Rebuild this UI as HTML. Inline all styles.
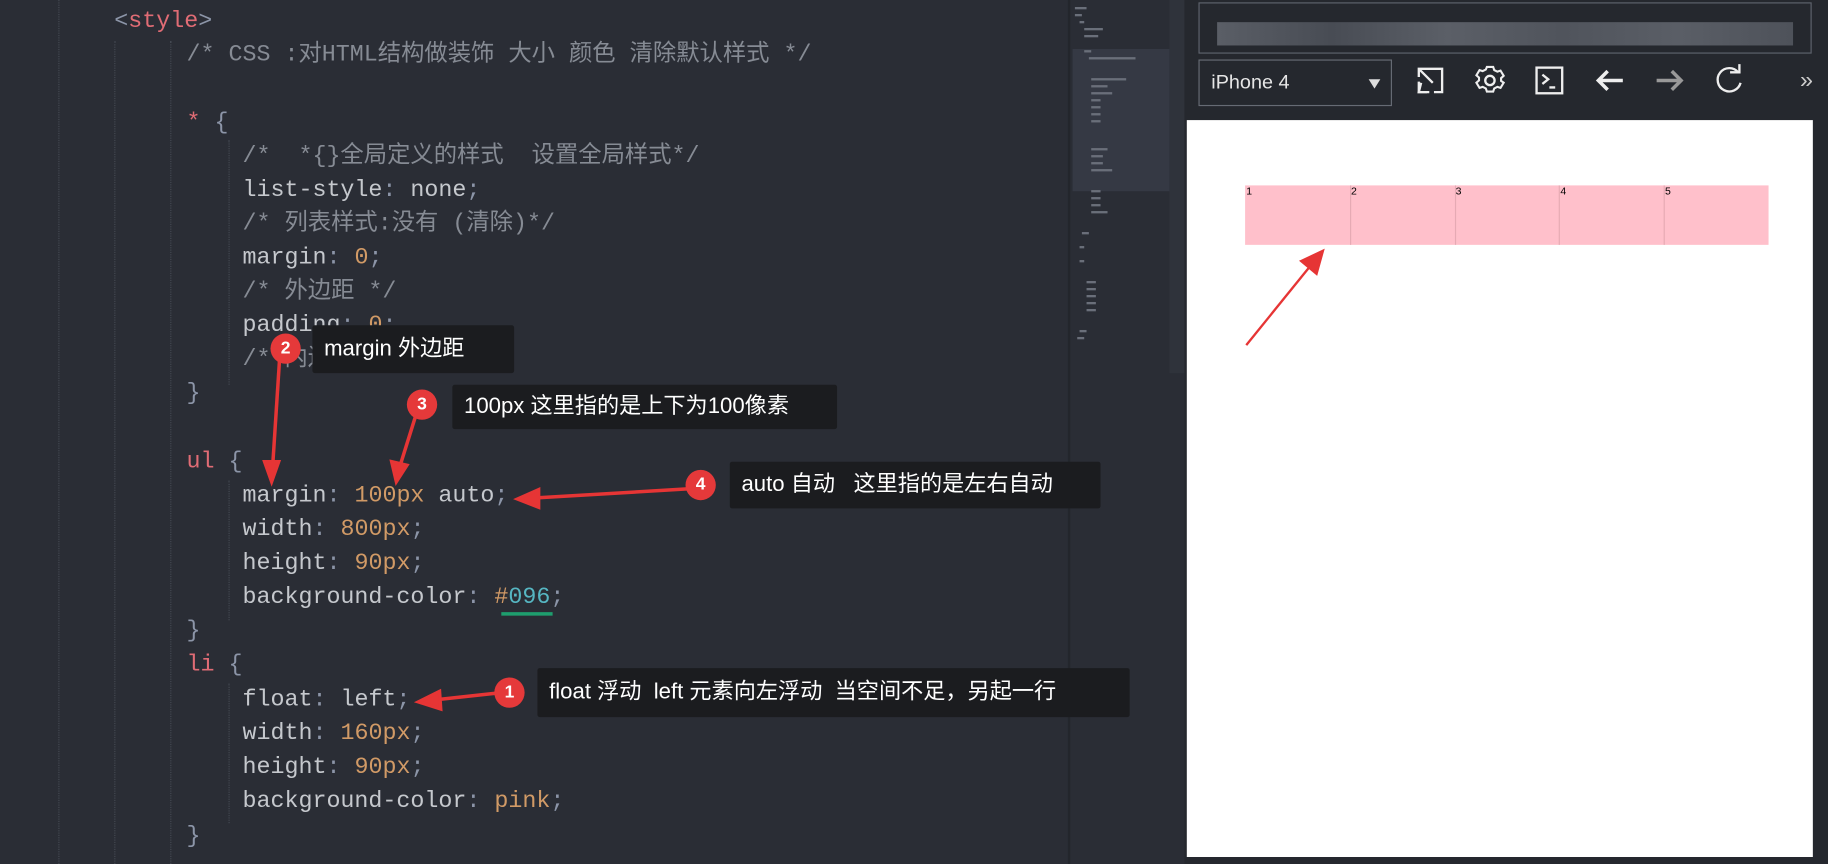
<!DOCTYPE html>
<html><head><meta charset="utf-8">
<style>
html,body{margin:0;padding:0;background:#2a2d35;overflow:hidden;width:1828px;height:864px}
#w{position:absolute;left:0;top:0;width:1568px;height:741px;transform:scale(1.16582,1.16599);transform-origin:0 0;background:#2a2d35;overflow:hidden}
.ln{position:absolute;font-family:"Liberation Mono","Noto Sans CJK SC",monospace;font-size:20px;line-height:29px;height:29px;color:#c5c8cd;white-space:pre;letter-spacing:0}
.c{color:#868b94}
.s{color:#e06c75}
.n{color:#d19a66}
.p{color:#8c95a8}
.g{position:absolute;width:0;border-left:1px dotted #444952}
.box{position:absolute;background:#1b1c1f;color:#fff;font-family:"Liberation Sans","Noto Sans CJK SC",sans-serif;font-size:19px;line-height:20px;padding:0 0 0 10px;display:flex;align-items:center;white-space:pre;border-radius:2px}
.dot{position:absolute;width:26px;height:26px;border-radius:50%;background:#e5393a;color:#fff;font:bold 15px "Liberation Sans",sans-serif;text-align:center;line-height:26px}
.tb{position:absolute;top:52px;width:34px;height:34px}
</style></head><body><div id="w">
<div class="g" style="left:50px;top:0;height:741px"></div>
<div class="g" style="left:98px;top:35px;height:706px"></div>
<div class="g" style="left:146px;top:35px;height:706px"></div>
<div class="g" style="left:196px;top:120px;height:210px"></div>
<div class="g" style="left:196px;top:412px;height:120px"></div>
<div class="g" style="left:196px;top:586px;height:120px"></div>

<div class="ln" style="left:98px;top:4px"><span class="p">&lt;</span><span class="s">style</span><span class="p">&gt;</span></div>
<div class="ln c" style="left:160px;top:33px">/* CSS :对HTML结构做装饰 大小 颜色 清除默认样式 */</div>
<div class="ln" style="left:160px;top:91px"><span class="s">*</span> <span class="p">{</span></div>
<div class="ln c" style="left:208px;top:120px">/*  *{}全局定义的样式  设置全局样式*/</div>
<div class="ln" style="left:208px;top:149px">list-style<span class="p">:</span> none<span class="p">;</span></div>
<div class="ln c" style="left:208px;top:178px">/* 列表样式:没有 (清除)*/</div>
<div class="ln" style="left:208px;top:207px">margin<span class="p">:</span> <span class="n">0</span><span class="p">;</span></div>
<div class="ln c" style="left:208px;top:236px">/* 外边距 */</div>
<div class="ln" style="left:208px;top:265px">padding<span class="p">:</span> <span class="n">0</span><span class="p">;</span></div>
<div class="ln c" style="left:208px;top:294px">/* 内边距 */</div>
<div class="ln p" style="left:160px;top:323px">}</div>
<div class="ln" style="left:160px;top:382px"><span class="s">ul</span> <span class="p">{</span></div>
<div class="ln" style="left:208px;top:411px">margin<span class="p">:</span> <span class="n">100px</span> auto<span class="p">;</span></div>
<div class="ln" style="left:208px;top:440px">width<span class="p">:</span> <span class="n">800px</span><span class="p">;</span></div>
<div class="ln" style="left:208px;top:469px">height<span class="p">:</span> <span class="n">90px</span><span class="p">;</span></div>
<div class="ln" style="left:208px;top:498px">background-color<span class="p">:</span> <span class="n">#</span><span style="color:#56b6c2">096</span><span class="p">;</span></div>
<div style="position:absolute;left:430px;top:525px;width:44px;height:3px;background:#1e9e6e"></div>
<div class="ln p" style="left:160px;top:527px">}</div>
<div class="ln" style="left:160px;top:556px"><span class="s">li</span> <span class="p">{</span></div>
<div class="ln" style="left:208px;top:586px">float<span class="p">:</span> left<span class="p">;</span></div>
<div class="ln" style="left:208px;top:615px">width<span class="p">:</span> <span class="n">160px</span><span class="p">;</span></div>
<div class="ln" style="left:208px;top:644px">height<span class="p">:</span> <span class="n">90px</span><span class="p">;</span></div>
<div class="ln" style="left:208px;top:673px">background-color<span class="p">:</span> <span class="n">pink</span><span class="p">;</span></div>
<div class="ln p" style="left:160px;top:703px">}</div>

<!-- minimap -->
<div style="position:absolute;left:916px;top:0;width:2px;height:741px;background:#23262c"></div>
<div style="position:absolute;left:920px;top:42px;width:84px;height:122px;background:#353944"></div>
<svg style="position:absolute;left:918px;top:0" width="100" height="741">
<g fill="#6a6f7a">
<rect x="4" y="6" width="10" height="2"/><rect x="4" y="12" width="6" height="2"/><rect x="8" y="18" width="4" height="2"/><rect x="12" y="24" width="16" height="2"/><rect x="12" y="30" width="12" height="2"/>
<rect x="12" y="43" width="6" height="2"/><rect x="16" y="49" width="40" height="2"/><rect x="18" y="67" width="30" height="2"/><rect x="18" y="73" width="14" height="2"/><rect x="18" y="79" width="18" height="2"/><rect x="18" y="85" width="8" height="2"/><rect x="18" y="91" width="8" height="2"/><rect x="18" y="97" width="8" height="2"/><rect x="18" y="103" width="8" height="2"/>
<rect x="18" y="127" width="14" height="2"/><rect x="18" y="133" width="10" height="2"/><rect x="18" y="139" width="10" height="2"/><rect x="18" y="145" width="18" height="2"/><rect x="18" y="163" width="8" height="2"/><rect x="18" y="169" width="8" height="2"/><rect x="18" y="175" width="8" height="2"/><rect x="18" y="181" width="14" height="2"/>
<rect x="10" y="199" width="6" height="2"/><rect x="8" y="211" width="4" height="2"/><rect x="8" y="223" width="4" height="2"/><rect x="14" y="241" width="8" height="2"/><rect x="14" y="247" width="8" height="2"/><rect x="14" y="253" width="8" height="2"/><rect x="14" y="259" width="8" height="2"/><rect x="14" y="265" width="8" height="2"/><rect x="8" y="283" width="6" height="2"/><rect x="6" y="289" width="6" height="2"/>
</g></svg>
<div style="position:absolute;left:1003px;top:0;width:13px;height:320px;background:#2f333b"></div>

<!-- right panel -->
<div style="position:absolute;left:1016px;top:0;width:552px;height:741px;background:#25282e"></div>
<div style="position:absolute;left:1028px;top:2px;width:526px;height:44px;border:1px solid #5e636d;box-sizing:border-box"></div>
<div style="position:absolute;left:1044px;top:19px;width:494px;height:20px;background:linear-gradient(90deg,#5a5e66,#484c54 20%,#5b5f67 40%,#50545c 60%,#5a5e66 80%,#4e525a)"></div>
<div style="position:absolute;left:1028px;top:51px;width:166px;height:40px;border:1px solid #666b74;box-sizing:border-box;color:#e6e6e6;font:17px 'Liberation Sans',sans-serif;line-height:38px;padding-left:10px">iPhone 4</div>
<div style="position:absolute;left:1174px;top:68px;width:0;height:0;border-left:5px solid transparent;border-right:5px solid transparent;border-top:8px solid #ddd"></div>
<svg class="tb" style="left:1210px" viewBox="0 0 34 34" fill="none" stroke="#eee" stroke-width="2"><path d="M7 14V7h20v20h-7M7 7l12 12M7 7v0M9 19l-2 8h7"/><path d="M7 18v9h9"/></svg>
<svg class="tb" style="left:1261px" viewBox="0 0 34 34" fill="none" stroke="#eee" stroke-width="2"><path d="M14 7h6l1 3 3 1.5 3-1 3 5-2.5 2.2v2.6L30 22l-3 5-3-1-3 1.5-1 3h-6l-1-3L10 26l-3 1-3-5 2.5-2.2v-2.6L4 15l3-5 3 1 3-1.5z" transform="scale(.9) translate(2 -1)"/><circle cx="17" cy="17" r="4"/></svg>
<svg class="tb" style="left:1312px" viewBox="0 0 34 34" fill="none" stroke="#eee" stroke-width="2"><rect x="6" y="6" width="22" height="22"/><path d="M11 12l5 4-5 4M17 23h5"/></svg>
<svg class="tb" style="left:1364px" viewBox="0 0 34 34" fill="none" stroke="#eee" stroke-width="3"><path d="M28 17H7M15 9l-8 8 8 8"/></svg>
<svg class="tb" style="left:1415px" viewBox="0 0 34 34" fill="none" stroke="#999" stroke-width="3"><path d="M6 17h21M19 9l8 8-8 8"/></svg>
<svg class="tb" style="left:1466px" viewBox="0 0 34 34" fill="none" stroke="#eee" stroke-width="2"><path d="M25 10A10 10 0 1 0 27 19"/><path d="M18 8h8V1" transform="translate(0 2)"/></svg>
<div style="position:absolute;left:1544px;top:58px;color:#ccc;font:20px 'Liberation Sans',sans-serif">»</div>
<div style="position:absolute;left:1018px;top:103px;width:537px;height:632px;background:#fff"></div>
<div style="position:absolute;left:1068px;top:159px;width:449px;height:51px;background:#ffc0cb"></div>
<div style="position:absolute;left:1068px;top:159px;font:9px 'Liberation Sans',sans-serif;color:#000;display:flex">
<div style="width:89.8px;height:51px;box-sizing:border-box;padding-left:1px">1</div><div style="width:89.8px;height:51px;border-left:1px solid #e6aab4;box-sizing:border-box">2</div><div style="width:89.8px;height:51px;border-left:1px solid #e6aab4;box-sizing:border-box">3</div><div style="width:89.8px;height:51px;border-left:1px solid #e6aab4;box-sizing:border-box">4</div><div style="width:89.8px;height:51px;border-left:1px solid #e6aab4;box-sizing:border-box">5</div></div>

<!-- arrows -->
<svg style="position:absolute;left:0;top:0" width="1568" height="741">
<g stroke="#e63535" stroke-width="3" fill="#e63535">
<line x1="240" y1="305" x2="234" y2="398"/><path d="M227 396l6 17 6-17z"/>
<line x1="358" y1="352" x2="343" y2="400"/><path d="M336 396l4 17 9-14z"/>
<line x1="595" y1="419" x2="460" y2="427"/><path d="M462 420l-18 8 18 7z"/>
<line x1="430" y1="594" x2="375" y2="600"/><path d="M377 593l-18 9 19 6z"/>
<line x1="1069" y1="296" x2="1124" y2="228" stroke-width="2"/><path d="M1117 224l17-8-5 18z"/>
</g></svg>

<div class="box" style="left:268px;top:279px;width:163px;height:41px">margin 外边距</div>
<div class="dot" style="left:232px;top:286px">2</div>
<div class="box" style="left:388px;top:330px;width:320px;height:38px">100px 这里指的是上下为100像素</div>
<div class="dot" style="left:349px;top:334px">3</div>
<div class="box" style="left:626px;top:396px;width:308px;height:40px">auto 自动   这里指的是左右自动</div>
<div class="dot" style="left:588px;top:403px">4</div>
<div class="box" style="left:461px;top:573px;width:498px;height:42px">float 浮动  left 元素向左浮动  当空间不足，另起一行</div>
<div class="dot" style="left:424px;top:581px">1</div>
</div></body></html>
